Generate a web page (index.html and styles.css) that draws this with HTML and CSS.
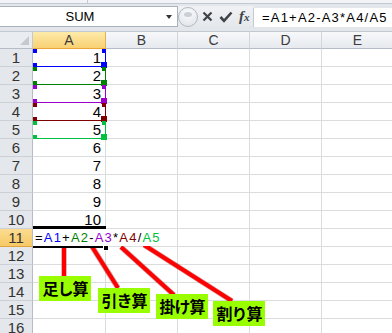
FILE: index.html
```html
<!DOCTYPE html>
<html lang="ja">
<head>
    <meta charset="UTF-8">
    <title>SUM - 四則演算</title>
    <link rel="stylesheet" href="styles.css">
</head>
<body>
    <div class="ribbon-edge"><span class="split"></span></div>

    <div class="formula-bar">
        <div class="name-box"><span class="name">SUM</span><span class="drop"></span></div>
        <div class="tools">
            <span class="knob"></span>
            <svg class="tool" width="11" height="11" viewBox="0 0 11 11"><path d="M1.5 1.5 L9.5 9.5 M9.5 1.5 L1.5 9.5" stroke="#3f4348" stroke-width="2.2"/></svg>
            <svg class="tool" width="14" height="12" viewBox="0 0 14 12"><path d="M1.5 6 L5 9.8 L12.5 1.5" fill="none" stroke="#3f4348" stroke-width="2.6"/></svg>
            <span class="fx"><i>f</i><small>x</small></span>
        </div>
        <div class="formula-input">=A1+A2-A3*A4/A5</div>
    </div>

    <div class="sheet">
        <div class="corner"></div><div class="ch on">A</div><div class="ch">B</div><div class="ch">C</div><div class="ch">D</div><div class="ch">E</div>

        <div class="rh">1</div><div class="c ref k1">1</div><div class="c"></div><div class="c"></div><div class="c"></div><div class="c"></div>
        <div class="rh">2</div><div class="c ref k2">2</div><div class="c"></div><div class="c"></div><div class="c"></div><div class="c"></div>
        <div class="rh">3</div><div class="c ref k3">3</div><div class="c"></div><div class="c"></div><div class="c"></div><div class="c"></div>
        <div class="rh">4</div><div class="c ref k4">4</div><div class="c"></div><div class="c"></div><div class="c"></div><div class="c"></div>
        <div class="rh">5</div><div class="c ref k5">5</div><div class="c"></div><div class="c"></div><div class="c"></div><div class="c"></div>
        <div class="rh">6</div><div class="c">6</div><div class="c"></div><div class="c"></div><div class="c"></div><div class="c"></div>
        <div class="rh">7</div><div class="c">7</div><div class="c"></div><div class="c"></div><div class="c"></div><div class="c"></div>
        <div class="rh">8</div><div class="c">8</div><div class="c"></div><div class="c"></div><div class="c"></div><div class="c"></div>
        <div class="rh">9</div><div class="c">9</div><div class="c"></div><div class="c"></div><div class="c"></div><div class="c"></div>
        <div class="rh">10</div><div class="c">10</div><div class="c"></div><div class="c"></div><div class="c"></div><div class="c"></div>
        <div class="rh on">11</div>
        <div class="c active"><span class="f">=<b class="k1">A1</b>+<b class="k2">A2</b>-<b class="k3">A3</b>*<b class="k4">A4</b>/<b class="k5">A5</b></span></div>
        <div class="c"></div><div class="c"></div><div class="c"></div><div class="c"></div>
        <div class="rh">12</div><div class="c"></div><div class="c"></div><div class="c"></div><div class="c"></div><div class="c"></div>
        <div class="rh">13</div><div class="c"></div><div class="c"></div><div class="c"></div><div class="c"></div><div class="c"></div>
        <div class="rh">14</div><div class="c"></div><div class="c"></div><div class="c"></div><div class="c"></div><div class="c"></div>
        <div class="rh">15</div><div class="c"></div><div class="c"></div><div class="c"></div><div class="c"></div><div class="c"></div>
        <div class="rh">16</div><div class="c"></div><div class="c"></div><div class="c"></div><div class="c"></div><div class="c"></div>
    </div>

    <!-- callout lines from each operator -->
    <svg class="marks" width="392" height="333" viewBox="0 0 392 333">
        <g stroke="#7a0000" stroke-width="5.5" stroke-opacity="0.35">
            <path d="M64 246 L64 278"/>
            <path d="M91 245 L118 288"/>
            <path d="M121 247 L174 295"/>
            <path d="M144 245 L232 301"/>
        </g>
        <g stroke="#ff0000" stroke-width="4">
            <path d="M64 246 L64 278"/>
            <path d="M91 245 L118 288"/>
            <path d="M121 247 L174 295"/>
            <path d="M144 245 L232 301"/>
        </g>
    </svg>

    <div class="tag add">足し算</div>
    <div class="tag sub">引き算</div>
    <div class="tag mul">掛け算</div>
    <div class="tag div">割り算</div>
</body>
</html>
```

FILE: styles.css
```css
* { box-sizing: border-box; }
body { margin: 0; width: 392px; height: 333px; overflow: hidden; position: relative; background: #fff; font-family: "Liberation Sans", Arial, sans-serif; color: #000; }

/* top of window */
.ribbon-edge { height: 4px; display: flex; background: #f1f3f6; border-bottom: 1px solid #c3c9d1; }
.ribbon-edge .split { margin-left: 87px; width: 1px; background: #c3c9d1; }

.formula-bar { display: flex; height: 27px; padding-top: 2px; background: #e3e7ec; }
.name-box { width: 178px; height: 21px; display: flex; align-items: center; background: #fff; border: 1px solid #a9b1bb; border-left: 0; font-size: 13px; }
.name-box .name { width: 160px; text-align: center; }
.name-box .drop { margin-left: 6px; border-left: 3.5px solid transparent; border-right: 3.5px solid transparent; border-top: 4px solid #333; }

.tools { width: 75px; height: 21px; display: flex; align-items: center; background: linear-gradient(#f0f2f5, #e4e7eb); }
.tools .knob { width: 20px; height: 20px; margin-right: 4px; border-radius: 50%; border: 1px solid #b3b9c1; background: radial-gradient(circle at 50% 30%, #fbfbfc, #dde1e6); position: relative; }
.tools .knob::after { content: ""; position: absolute; left: 5px; top: 4px; width: 8px; height: 5px; border-radius: 50%; background: #cbd0d6; }
.tools .tool { margin-right: 6px; }
.tools .fx { font-family: "Liberation Serif", serif; font-size: 15px; color: #3f4348; }
.tools .fx i { font-weight: bold; }
.tools .fx small { font-size: 11px; font-style: italic; font-weight: bold; }

.formula-input { flex: 1; height: 19px; margin-top: 2px; padding-left: 8px; background: #fff; border-left: 1px solid #c4cad2; font-size: 13px; line-height: 19px; letter-spacing: 1.2px; white-space: nowrap; }

/* grid */
.sheet { display: grid; grid-template-columns: 33px 73px repeat(4, 72px); grid-template-rows: 17px; grid-auto-rows: 18px; border-top: 1px solid #c3c9d1; }
.corner { position: relative; background: #e9ecf0; border-right: 1px solid #c3c9d1; border-bottom: 1px solid #b5bcc6; }
.corner::after { content: ""; position: absolute; right: 3px; bottom: 3px; border-left: 9px solid transparent; border-bottom: 9px solid #c5cad0; }
.ch { background: linear-gradient(#f7f8fa, #e6e9ee); border-right: 1px solid #d2d6dc; border-bottom: 1px solid #b5bcc6; text-align: center; font-size: 14px; line-height: 16px; color: #3c3c3c; }
.ch.on { background: linear-gradient(#fdeaa9, #f8d173); border-right-color: #e2b24e; border-bottom-color: #eca63a; }
.rh { background: #e4e7eb; border-right: 1px solid #b5bcc6; border-bottom: 1px solid #cdd1d7; text-align: center; font-size: 15px; line-height: 17px; color: #333; }
.rh.on { background: linear-gradient(#fbdc90, #f6c965); border-bottom-color: #e0a23d; }
.c { border-right: 1px solid #dadcdd; border-bottom: 1px solid #dadcdd; padding-right: 4px; text-align: right; font-size: 15px; line-height: 17px; }

/* range finder colours */
.k1 { --ref: #0000ff; color: #0000ff; }
.k2 { --ref: #008000; color: #008000; }
.k3 { --ref: #9900cc; color: #9900cc; }
.k4 { --ref: #800000; color: #800000; }
.k5 { --ref: #00c040; color: #00c040; }
.c.ref { position: relative; color: #000; border-right-color: var(--ref); border-bottom-color: var(--ref); }
.c.ref::before { content: ""; position: absolute; left: 0; top: 0; width: 4px; height: 4px; background: var(--ref); box-shadow: 69px 0 var(--ref), 0 14px var(--ref), 69px 14px 0 1px var(--ref); }

/* cell being edited */
.c.active { position: relative; z-index: 1; padding: 0; text-align: left; box-shadow: 0 -3px 0 #000; }
.c.active::before { content: ""; position: absolute; left: 0; right: 1px; top: 17px; height: 2px; background: #000; }
.c.active::after { content: ""; position: absolute; left: 70px; top: 17px; width: 4px; height: 4px; background: #000; border: 1px solid #fff; border-top: 0; }
.c.active .f { position: absolute; left: 2px; top: 0; padding-right: 2px; background: #fff; white-space: nowrap; font-size: 13px; letter-spacing: 1.2px; }
.c.active .f b { font-weight: normal; }

/* callouts */
.marks { position: absolute; left: 0; top: 0; pointer-events: none; }
.tag { position: absolute; width: 52px; height: 25px; background: #99ff00; font-family: "Noto Sans CJK JP", sans-serif; font-weight: bold; font-size: 16px; line-height: 25px; text-align: center; letter-spacing: -1px; }
.tag.add { left: 39px; top: 276px; }
.tag.sub { left: 98px; top: 288px; }
.tag.mul { left: 156px; top: 294px; }
.tag.div { left: 213px; top: 301px; }
```
